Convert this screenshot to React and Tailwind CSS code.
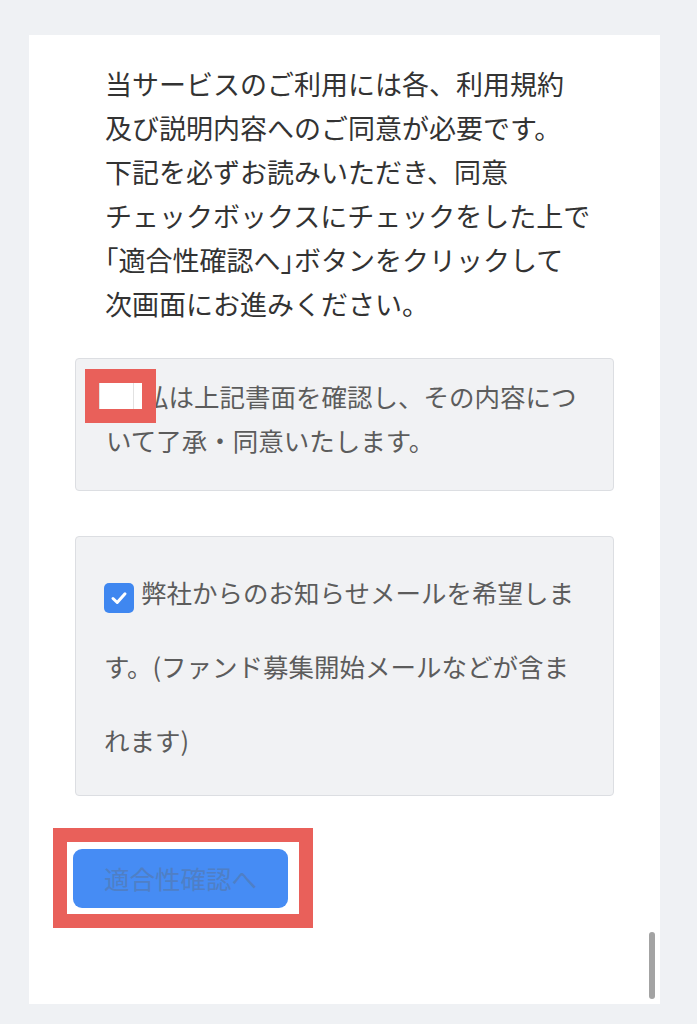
export default function App() {
  const jp = { fontFamily: '"Noto Sans CJK JP", "Noto Sans", sans-serif' };
  return (
    <div className="h-[1024px] bg-[#eff1f4] pt-[35px] pl-[29px] pr-[37px]" style={jp}>
      <div className="relative h-[969px] bg-white pt-[27px] px-[46px]">
        <p className="pl-[30px] text-[27px] leading-[44px] text-[#333333] whitespace-nowrap">
          当サービスのご利用には各、利用規約<br />
          及び説明内容へのご同意が必要です。<br />
          下記を必ずお読みいただき、同意<br />
          チェックボックスにチェックをした上で<br />
          <span className="[font-feature-settings:'halt']">「</span>適合性確認へ<span className="[font-feature-settings:'halt']">」</span>ボタンをクリックして<br />
          次画面にお進みください。
        </p>

        <div className="relative mt-[32px] h-[133px] rounded-[4px] border border-[#dcdee2] bg-[#f1f2f4] pl-[30px] pt-[15px] text-[25.5px] leading-[44px] text-[#5c5c5c] whitespace-nowrap">
          <span className="inline-block w-[37px]"></span>私は上記書面を確認し、その内容につ<br />
          いて了承・同意いたします。
          <div className="absolute left-[9px] top-[10px] h-[54px] w-[71px] border-[14px] border-[#e9605a] bg-white">
            <div className="h-full w-[35px] border-x border-[#e2e2e2]"></div>
          </div>
        </div>

        <div className="mt-[45px] h-[260px] rounded-[4px] border border-[#dcdee2] bg-[#f1f2f4] pl-[28px] pt-[18px] text-[25.5px] leading-[74px] text-[#5c5c5c] whitespace-nowrap">
          <span className="mr-[7px] inline-flex h-[30px] w-[30px] items-center justify-center rounded-[5px] bg-[#3f87f0] align-[-5px]">
            <svg width="20" height="20" viewBox="0 0 20 20" fill="none">
              <path d="M4 10.5 L8.2 14.5 L16 5.8" stroke="white" strokeWidth="3" strokeLinecap="round" strokeLinejoin="round" />
            </svg>
          </span>
          弊社からのお知らせメールを希望しま<br />
          す。(ファンド募集開始メールなどが含ま<br />
          れます)
        </div>

        <div className="mt-[32px] ml-[-22px] inline-block border-[14px] border-[#e9605a] pl-[6px] pr-[11px] pt-[7px] pb-[6px]">
          <button className="flex h-[59px] w-[215px] items-center justify-center rounded-[9px] bg-[#468cf4] text-[25.5px] text-[#4f7fc6]">
            適合性確認へ
          </button>
        </div>

        <div className="absolute right-[5px] bottom-[5px] h-[67px] w-[6px] rounded-full bg-[#a3a3a3]"></div>
      </div>
    </div>
  );
}
